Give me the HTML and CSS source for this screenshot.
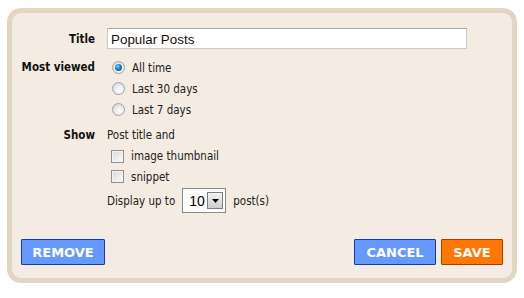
FILE: index.html
```html
<!DOCTYPE html>
<html>
<head>
<meta charset="utf-8">
<link rel="stylesheet" href="styles.css">
</head>
<body>
<div class="frame">
  <div class="form">
    <div class="row row-title">
      <label class="label">Title</label>
      <div class="field"><input class="text-input" type="text" value="Popular Posts"></div>
    </div>
    <div class="row row-viewed">
      <div class="label label-top">Most viewed</div>
      <div class="field options">
        <label class="opt"><span class="radio checked"></span>All time</label>
        <label class="opt"><span class="radio"></span>Last 30 days</label>
        <label class="opt"><span class="radio"></span>Last 7 days</label>
      </div>
    </div>
    <div class="row row-show">
      <div class="label label-top">Show</div>
      <div class="field options">
        <div class="plain">Post title and</div>
        <label class="opt opt-check"><span class="check"></span>image thumbnail</label>
        <label class="opt opt-check"><span class="check"></span>snippet</label>
        <div class="display"><span>Display up to</span><span class="select"><span class="select-val">10</span><span class="select-btn"><svg width="7" height="4" viewBox="0 0 7 4"><path d="M0 0H7L3.5 4Z" fill="#000"/></svg></span></span><span>post(s)</span></div>
      </div>
    </div>
  </div>
  <div class="footer">
    <button class="btn btn-blue">REMOVE</button>
    <div class="right-btns">
      <button class="btn btn-blue btn-cancel">CANCEL</button>
      <button class="btn btn-orange">SAVE</button>
    </div>
  </div>
</div>
</body>
</html>
```
FILE: styles.css
```css
html, body {
  margin: 0;
  padding: 0;
  background: #ffffff;
}
body {
  font-family: "DejaVu Sans Condensed", "DejaVu Sans", sans-serif;
  font-size: 11.5px;
  color: #222;
}
.frame {
  box-sizing: border-box;
  margin: 8px 0 0 7px;
  width: 510px;
  height: 275px;
  border: 5px solid #e2d6c3;
  border-radius: 14px;
  background: #f4ebe2;
  display: flex;
  flex-direction: column;
  padding: 15px 9px 13px 9px;
}
.form {
  display: flex;
  flex-direction: column;
}
.row {
  display: grid;
  grid-template-columns: 74px 1fr;
  column-gap: 12px;
}
.row-title {
  align-items: center;
  height: 21px;
}
.row-viewed {
  margin-top: 8px;
}
.row-show {
  margin-top: 5px;
}
.label {
  text-align: right;
  font-weight: bold;
  color: #111;
  white-space: nowrap;
}
.label-top {
  line-height: 21px;
}
.text-input {
  box-sizing: border-box;
  width: 360px;
  height: 21px;
  margin: 0;
  border: 1px solid #c8ccd2;
  border-top-color: #a9abae;
  background: #fff;
  font-family: "Liberation Sans", Arial, sans-serif;
  font-size: 13.4px;
  color: #111;
  padding: 1px 3px 0 3px;
  outline: none;
}
.options {
  display: flex;
  flex-direction: column;
}
.opt {
  display: flex;
  align-items: center;
  height: 21px;
  padding-left: 5px;
}
.opt-check {
  height: 20.5px;
  padding-left: 4px;
}
.plain {
  line-height: 21px;
}
.radio {
  box-sizing: border-box;
  width: 13px;
  height: 13px;
  border-radius: 50%;
  border: 1px solid #a3a3a3;
  background: radial-gradient(circle at 60% 65%, #ffffff 0%, #f0f0f0 35%, #cfcfcf 100%);
  margin-right: 7px;
  position: relative;
}
.radio.checked::after {
  content: "";
  position: absolute;
  left: 2px;
  top: 2px;
  width: 7px;
  height: 7px;
  border-radius: 50%;
  background: radial-gradient(circle at 40% 35%, #7fd0ff 0%, #1a7fc8 45%, #0b3f78 100%);
}
.check {
  box-sizing: border-box;
  width: 13px;
  height: 13px;
  border: 1px solid #8f8f8f;
  background: linear-gradient(135deg, #d8d8d8 0%, #eeeeee 60%, #fafafa 100%);
  box-shadow: inset 0 0 0 1px #f4f4f4;
  margin-right: 7px;
}
.display {
  display: flex;
  align-items: center;
  height: 25px;
  margin-top: 1px;
  white-space: nowrap;
}
.select {
  box-sizing: border-box;
  display: inline-flex;
  align-items: center;
  justify-content: space-between;
  width: 44px;
  height: 25px;
  margin: 0 7px 0 7px;
  border: 1px solid #8a8a8a;
  background: #fff;
  padding: 0 2px 0 6px;
}
.select-val {
  font-family: "Liberation Sans", Arial, sans-serif;
  font-size: 14px;
  color: #000;
}
.select-btn {
  box-sizing: border-box;
  width: 16px;
  height: 17px;
  border: 1px solid #7d7d7d;
  background: linear-gradient(#f2f2f2, #cfcfcf);
  display: flex;
  align-items: center;
  justify-content: center;
}
.footer {
  margin-top: auto;
  display: flex;
  justify-content: space-between;
  align-items: flex-end;
}
.right-btns {
  display: flex;
  gap: 5px;
}
.btn {
  box-sizing: border-box;
  height: 26px;
  margin: 0;
  padding: 0;
  font-family: "DejaVu Sans", Verdana, sans-serif;
  font-weight: bold;
  font-size: 13px;
  color: #fff;
  cursor: pointer;
  border-radius: 1px;
}
.btn-blue {
  background: #6699ff;
  border: 1px solid #163d9c;
  width: 84px;
}
.btn-cancel {
  width: 82px;
}
.btn-orange {
  background: #ff7700;
  border: 1px solid #a04400;
  width: 62px;
}
```
